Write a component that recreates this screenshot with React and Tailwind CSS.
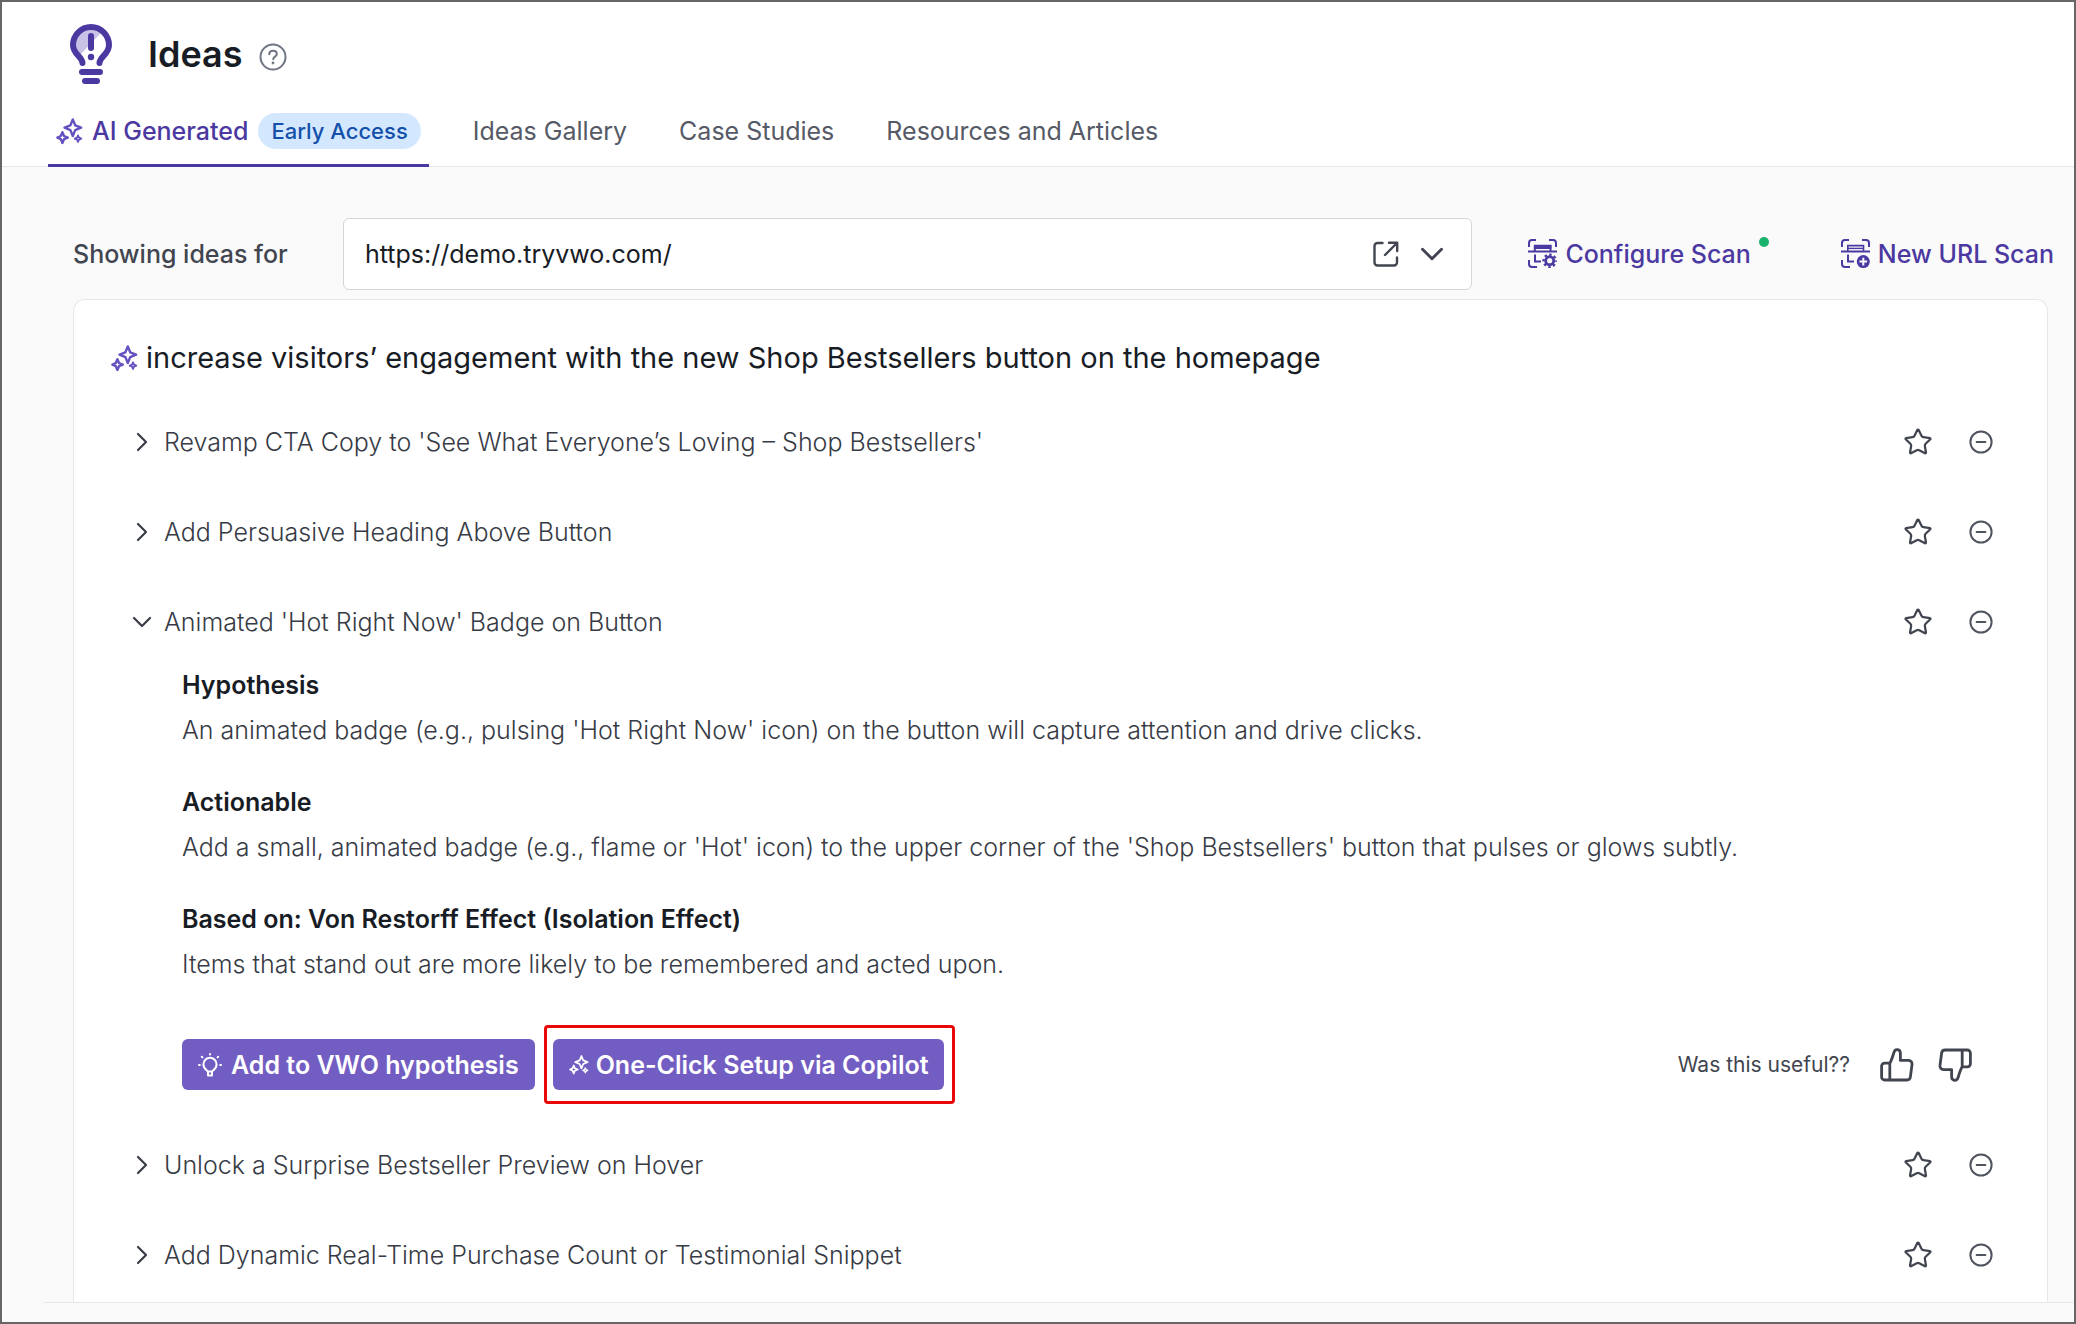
import React, { useState } from "react";
import { ChevronDown, ChevronRight, Star } from "lucide-react";

const tabs = ["Ideas Gallery", "Case Studies", "Resources and Articles"];

const ideas = [
  { id: 1, title: "Revamp CTA Copy to 'See What Everyone’s Loving – Shop Bestsellers'" },
  { id: 2, title: "Add Persuasive Heading Above Button" },
  {
    id: 3,
    title: "Animated 'Hot Right Now' Badge on Button",
    details: [
      {
        label: "Hypothesis",
        text: "An animated badge (e.g., pulsing 'Hot Right Now' icon) on the button will capture attention and drive clicks.",
      },
      {
        label: "Actionable",
        text: "Add a small, animated badge (e.g., flame or 'Hot' icon) to the upper corner of the 'Shop Bestsellers' button that pulses or glows subtly.",
      },
      {
        label: "Based on: Von Restorff Effect (Isolation Effect)",
        text: "Items that stand out are more likely to be remembered and acted upon.",
      },
    ],
  },
  { id: 4, title: "Unlock a Surprise Bestseller Preview on Hover" },
  { id: 5, title: "Add Dynamic Real-Time Purchase Count or Testimonial Snippet" },
];

function BulbLogo() {
  return (
    <svg width="42" height="60" viewBox="0 0 42 60" fill="none" aria-hidden="true">
      <path d="M31 9 A16 16 0 0 0 5 21 C5 25 7 28 10 31 Z" fill="#c8c2e6" />
      <g stroke="#4b38a1" strokeWidth="6" strokeLinecap="round">
        <path d="M12.5 39 C12 32 3 30.5 3 21 A18 18 0 1 1 39 21 C39 30.5 30 32 29.5 39" />
        <path d="M21 12V24" />
        <path d="M12 48H30" />
        <path d="M15 57H27" />
      </g>
      <circle cx="21" cy="33" r="3.2" fill="#4b38a1" />
    </svg>
  );
}

function Sparkles({ className }) {
  return (
    <svg
      className={className}
      viewBox="0 0 27 27"
      fill="none"
      stroke="currentColor"
      strokeWidth="2.4"
      strokeLinejoin="round"
      aria-hidden="true"
    >
      <path d="M16.8 1.4 L19.2 7.3 L25.1 9.7 L19.2 12.1 L16.8 18 L14.4 12.1 L8.5 9.7 L14.4 7.3 Z" />
      <path d="M6.4 14.2 L8 18 L11.8 19.6 L8 21.2 L6.4 25 L4.8 21.2 L1.4 19.6 L4.8 18 Z" />
      <path d="M22 17.4 L23 19.7 L25.3 20.7 L23 21.7 L22 24 L21 21.7 L18.7 20.7 L21 19.7 Z" strokeWidth="1.8" />
    </svg>
  );
}

function HelpIcon() {
  return (
    <svg width="28" height="28" viewBox="0 0 28 28" fill="none" stroke="#6f7582" strokeWidth="2" strokeLinecap="round" aria-hidden="true">
      <circle cx="14" cy="14" r="12.5" />
      <path d="M10.2 11.2 C10.4 8.8 12 7.8 14 7.8 C16.2 7.8 17.8 9 17.8 11 C17.8 13.4 14.2 13.8 14.2 16.2" />
      <circle cx="14" cy="20" r="0.6" strokeWidth="1.6" />
    </svg>
  );
}

function ScanFrame({ children }) {
  return (
    <svg width="29" height="30" viewBox="0 0 29 30" fill="none" stroke="currentColor" strokeWidth="2" aria-hidden="true">
      <path d="M1 8V4a3 3 0 0 1 3-3h4M21 1h4a3 3 0 0 1 3 3v4M1 21v4a3 3 0 0 0 3 3h5" />
      <path d="M0 12.5H29" />
      <path d="M7 15.5V22.5H13" />
      {children}
    </svg>
  );
}

function ConfigureIcon() {
  return (
    <ScanFrame>
      <path d="M6.8 12V6.8H22.5V12" />
      <path d="M6 6H23.4V10H6Z" fill="currentColor" stroke="none" />
      <circle cx="21.7" cy="21.7" r="4" strokeWidth="2.8" />
      <circle cx="21.7" cy="21.7" r="6.1" strokeWidth="2.4" strokeDasharray="2.4 2.39" strokeDashoffset="1.2" />
    </ScanFrame>
  );
}

function NewScanIcon() {
  return (
    <ScanFrame>
      <path d="M6.8 12V6.6H22.5V12" strokeWidth="1.6" />
      <path d="M7 9.4H22" strokeWidth="1.4" />
      <circle cx="22.3" cy="22.6" r="6.5" fill="currentColor" stroke="none" />
      <path d="M22.3 18.8V26.4M18.5 22.6H26.1" stroke="#fafafa" />
    </ScanFrame>
  );
}

function ExternalIcon() {
  return (
    <svg width="26" height="26" viewBox="0 0 26 26" fill="none" stroke="#41454f" strokeWidth="2.4" strokeLinecap="round" strokeLinejoin="round" aria-hidden="true">
      <path d="M9.5 2H4.5A3 3 0 0 0 1.5 5V21.5A3 3 0 0 0 4.5 24.5H21A3 3 0 0 0 24 21.5V16.5" />
      <path d="M16 1.8H24.2V10M24 2L12 14" />
    </svg>
  );
}

function IdeaBulbIcon() {
  return (
    <svg width="24" height="24" viewBox="0 0 24 24" fill="none" stroke="currentColor" strokeWidth="2" strokeLinecap="round" aria-hidden="true">
      <path d="M9.8 18.4C9.8 17.6 5.4 16 5.4 11.4A6.6 6.6 0 0 1 18.6 11.4C18.6 16 14.2 17.6 14.2 18.4Z" strokeLinejoin="round" />
      <path d="M10 19V22.6H14V19" strokeLinejoin="round" />
      <path d="M12 1V1.6M3.8 3.8L4.4 4.4M20.2 3.8L19.6 4.4M1 12H1.8M22.2 12H23" />
    </svg>
  );
}

function Thumb({ className }) {
  return (
    <svg className={className} width="34" height="34" viewBox="0 0 34 34" fill="none" stroke="#41454f" strokeWidth="2.8" strokeLinejoin="round" aria-hidden="true">
      <path d="M9.8 15.2H4.6A3 3 0 0 0 1.6 18.2V29A3 3 0 0 0 4.6 32H27A3.6 3.6 0 0 0 30.4 28.8L32 16.6A3.6 3.6 0 0 0 28.6 12.4H20.4V5.4C20.4 0.8 15.2 0.6 14 4.2C13 7.4 11.8 12 9.8 15.2Z" />
      <path d="M9.8 15.2V32" />
    </svg>
  );
}

function MinusIcon() {
  return (
    <svg width="24" height="24" viewBox="0 0 24 24" fill="none" stroke="#50545f" strokeWidth="2" strokeLinecap="round" aria-hidden="true">
      <circle cx="12" cy="12" r="10.6" />
      <path d="M7.6 12H16.4" />
    </svg>
  );
}

function IdeaDetails({ details }) {
  return (
    <div className="pr-[75px] pb-4 pl-[108px]">
      <dl className="flex flex-col gap-9 text-[25px] leading-9">
        {details.map((item) => (
          <div key={item.label} className="flex flex-col gap-[9px]">
            <dt className="font-semibold text-[#181c25]">{item.label}</dt>
            <dd className="font-light text-[#373b45]">{item.text}</dd>
          </div>
        ))}
      </dl>

      <div className="mt-[43px] flex items-center justify-between">
        <div className="flex items-center gap-[9px] text-[25px] leading-9 font-semibold whitespace-nowrap text-white">
          <button type="button" className="flex h-[51px] items-center gap-[9px] rounded-md bg-[#725dc2] px-4">
            <IdeaBulbIcon />
            Add to VWO hypothesis
          </button>
          <div className="rounded-sm border-3 border-[#e80808] py-[11px] pr-2 pl-[6px]">
            <button type="button" className="flex h-[51px] items-center gap-[7px] rounded-md bg-[#725dc2] px-4">
              <Sparkles className="size-5" />
              One-Click Setup via Copilot
            </button>
          </div>
        </div>

        <div className="flex items-center text-[21px] leading-9 text-[#41454f]">
          <span>Was this useful??</span>
          <button type="button" aria-label="Useful" className="ml-[30px]">
            <Thumb />
          </button>
          <button type="button" aria-label="Not useful" className="ml-6">
            <Thumb className="rotate-180" />
          </button>
        </div>
      </div>
    </div>
  );
}

function App() {
  const [openId, setOpenId] = useState(3);
  const [url, setUrl] = useState("https://demo.tryvwo.com/");

  return (
    <div className="flex min-h-screen flex-col border-2 border-[#666666] bg-[#fafafa] font-[Inter,sans-serif] text-[#181c25]">
      <header className="border-b border-[#e6e7e9] bg-white">
        <div className="flex items-center pt-[22px] pl-[68px]">
          <BulbLogo />
          <h1 className="ml-9 text-4xl font-semibold">Ideas</h1>
          <button type="button" aria-label="Help" className="mt-[6px] ml-4">
            <HelpIcon />
          </button>
        </div>

        {/* Tabs */}
        <nav className="-mb-px flex gap-9 pl-[46px] text-[25px] leading-9 whitespace-nowrap">
          <button type="button" className="mt-[14px] flex h-[69px] items-center border-b-3 border-[#4b38a1] px-2 font-medium text-[#4b38a1]">
            <Sparkles className="mr-[9px] size-[27px] text-[#6750c0]" />
            AI Generated
            <span className="ml-[10px] rounded-full bg-[#d3e8ff] px-[13px] text-[22px] leading-9 text-[#1450aa]">
              Early Access
            </span>
          </button>
          {tabs.map((tab) => (
            <button key={tab} type="button" className="mt-[14px] h-[69px] border-b-3 border-transparent px-2 text-[#565a66]">
              {tab}
            </button>
          ))}
        </nav>
      </header>

      <div className="flex items-center pt-[51px] pr-5 pl-[71px] text-[25px] leading-9 font-medium whitespace-nowrap">
        <label htmlFor="site-url" className="w-[270px] text-[#41454f]">
          Showing ideas for
        </label>
        <div className="relative h-[72px] min-w-0 flex-1">
          <select
            id="site-url"
            value={url}
            onChange={(e) => setUrl(e.target.value)}
            className="h-full w-full appearance-none rounded-md border border-[#d5d6da] bg-white px-[21px] font-normal text-[#181c25]"
          >
            <option value="https://demo.tryvwo.com/">https://demo.tryvwo.com/</option>
          </select>
          <div className="pointer-events-none absolute inset-y-0 right-[21px] flex items-center gap-[14px]">
            <a href={url} aria-label="Open page" className="pointer-events-auto">
              <ExternalIcon />
            </a>
            <ChevronDown className="size-[38px] text-[#41454f]" strokeWidth={1.8} />
          </div>
        </div>
        <button type="button" className="ml-14 flex items-center gap-2 text-[#4b38a1]">
          <ConfigureIcon />
          Configure Scan
          <span className="mb-6 size-[10px] rounded-full bg-[#19b36b]" />
        </button>
        <button type="button" className="ml-[72px] flex items-center gap-2 text-[#4b38a1]">
          <NewScanIcon />
          New URL Scan
        </button>
      </div>

      <main className="mt-[9px] ml-[42px] border-b border-[#e6e7e9] pr-[26px] pl-[29px]">
        <section className="rounded-t-xl border border-b-0 border-[#e6e7e9] bg-white pt-[38px] pb-[2px]">
          <h2 className="flex items-center gap-2 pl-[37px] text-[29px] leading-10">
            <Sparkles className="size-[27px] text-[#6750c0]" />
            increase visitors’ engagement with the new Shop Bestsellers button on the homepage
          </h2>

          <ul className="mt-[19px]">
            {ideas.map((idea) => {
              const open = openId === idea.id;
              return (
                <li key={idea.id}>
                  <div className="flex h-[90px] items-center pr-[54px] pl-[52px]">
                    <button
                      type="button"
                      aria-expanded={open}
                      onClick={() => setOpenId(open ? null : idea.id)}
                      className="flex flex-1 items-center gap-[6px] text-left text-[25px] leading-9 font-light text-[#373b45]"
                    >
                      {open ? (
                        <ChevronDown className="size-8" strokeWidth={1.6} />
                      ) : (
                        <ChevronRight className="size-8" strokeWidth={1.6} />
                      )}
                      {idea.title}
                    </button>
                    <button type="button" aria-label="Save idea" className="mr-9">
                      <Star className="size-[30px] text-[#41454f]" strokeWidth={1.8} />
                    </button>
                    <button type="button" aria-label="Dismiss idea">
                      <MinusIcon />
                    </button>
                  </div>
                  {open && idea.details && <IdeaDetails details={idea.details} />}
                </li>
              );
            })}
          </ul>
        </section>
      </main>
    </div>
  );
}

export default App;
